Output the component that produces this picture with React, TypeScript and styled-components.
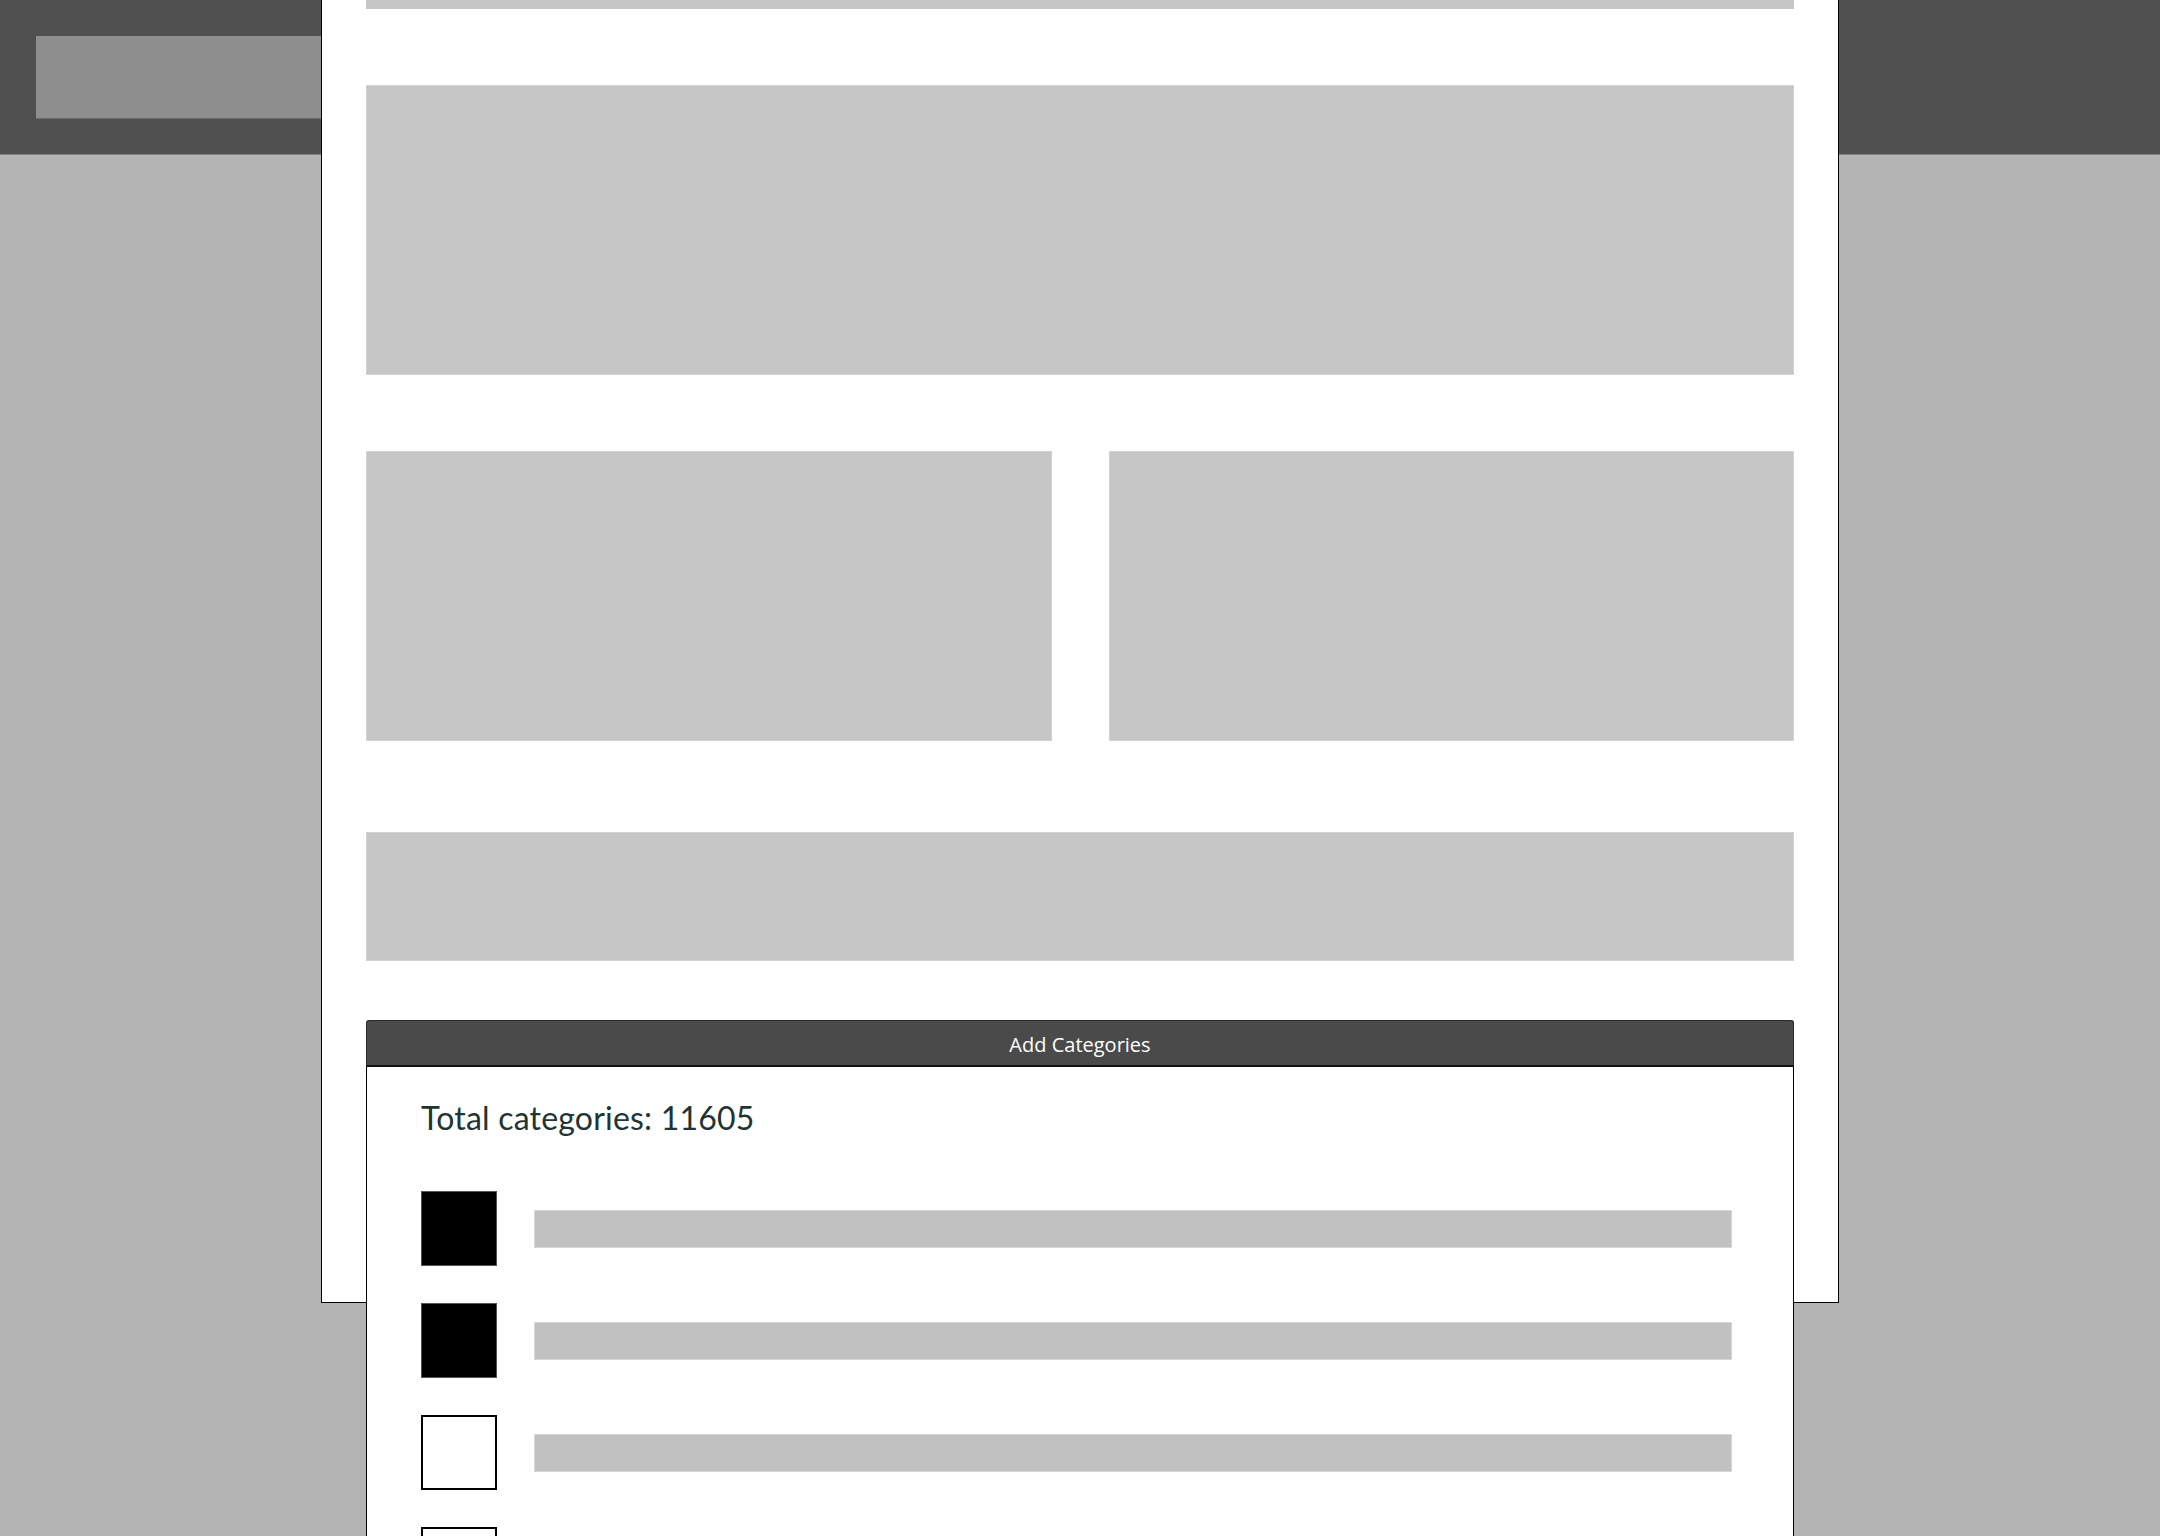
import styled, { createGlobalStyle } from 'styled-components';

const GlobalStyle = createGlobalStyle`
	html, body {
		margin: 0;
		padding: 0;
		background: #b4b4b4;
		overflow: hidden;
	}
	* {
		box-sizing: border-box;
	}
`;

const Page = styled.div`
	position: relative;
	width: 2160px;
	height: 1536px;
	overflow: hidden;
	background: #b4b4b4;
`;

const TopBar = styled.header`
	height: 155px;
	padding: 36px;
	background: #505050;
	border-bottom: 1px solid #858585;
`;

const Logo = styled.div`
	width: 420px;
	height: 83px;
	background: #8e8e8e;
	border-bottom: 1px solid #6c6c6c;
`;

// the modal sits over the page, its top edge is scrolled out of view
const Modal = styled.section`
	position: absolute;
	top: 0;
	left: 321px;
	width: 1518px;
	height: 1303px;
	padding: 0 44px;
	display: flex;
	flex-direction: column;
	background: #fff;
	border: 1px solid #000;
	border-top: none;
`;

const Placeholder = styled.div<{ $height: number; $top: number }>`
	height: ${(p) => p.$height}px;
	margin-top: ${(p) => p.$top}px;
	flex-shrink: 0;
	background: #c6c6c6;
	border: 1px solid #d2d2d2;
`;

const Strip = styled.div`
	height: 9px;
	flex-shrink: 0;
	background: #c6c6c6;
`;

const TwoUp = styled.div`
	display: grid;
	grid-template-columns: 1fr 1fr;
	gap: 57px;
	margin-top: 76px;
`;

const CategoryPanel = styled.div`
	margin-top: 59px;
	flex-shrink: 0;
	display: flex;
	flex-direction: column;
`;

const PanelHeader = styled.div`
	height: 47px;
	padding-top: 2px;
	display: flex;
	align-items: center;
	justify-content: center;
	background: #4a4a4a;
	border: 1px solid #2a2a2a;
	border-bottom: 2px solid #111;
	border-radius: 3px 3px 0 0;
	color: #fff;
	font-family: 'Open Sans', 'Liberation Sans', sans-serif;
	font-size: 20px;
`;

const PanelBody = styled.div`
	height: 600px;
	padding: 21px 61px 0 54px;
	background: #fff;
	border: 1px solid #000;
	border-top: none;
`;

const Total = styled.h3`
	margin: 0 0 45px;
	height: 58px;
	display: flex;
	align-items: center;
	font-family: Lato, 'Noto Sans', sans-serif;
	font-weight: 400;
	font-size: 32px;
	letter-spacing: 0.2px;
	color: #1f3434;
`;

const List = styled.ul`
	margin: 0;
	padding: 0;
	list-style: none;
	display: flex;
	flex-direction: column;
	gap: 37px;
`;

const Row = styled.li`
	display: flex;
	align-items: center;
	gap: 37px;
`;

const Check = styled.span<{ $checked: boolean }>`
	width: 76px;
	height: 75px;
	flex-shrink: 0;
	background: ${(p) => (p.$checked ? '#000' : '#fff')};
	border: ${(p) => (p.$checked ? '1px solid #555' : '2px solid #000')};
`;

const Bar = styled.span`
	flex: 1;
	height: 38px;
	background: #c1c1c1;
	border: 1px solid #d6d6d6;
`;

const rows = [true, true, false, false];

export default function App() {
	return (
		<Page>
			<GlobalStyle />
			<TopBar>
				<Logo />
			</TopBar>
			<Modal>
				<Strip />
				<Placeholder $height={290} $top={76} />
				<TwoUp>
					<Placeholder $height={290} $top={0} />
					<Placeholder $height={290} $top={0} />
				</TwoUp>
				<Placeholder $height={129} $top={91} />
				<CategoryPanel>
					<PanelHeader>Add Categories</PanelHeader>
					<PanelBody>
						<Total>Total categories: 11605</Total>
						<List>
							{rows.map((checked, i) => (
								<Row key={i}>
									<Check $checked={checked} />
									<Bar />
								</Row>
							))}
						</List>
					</PanelBody>
				</CategoryPanel>
			</Modal>
		</Page>
	);
}
